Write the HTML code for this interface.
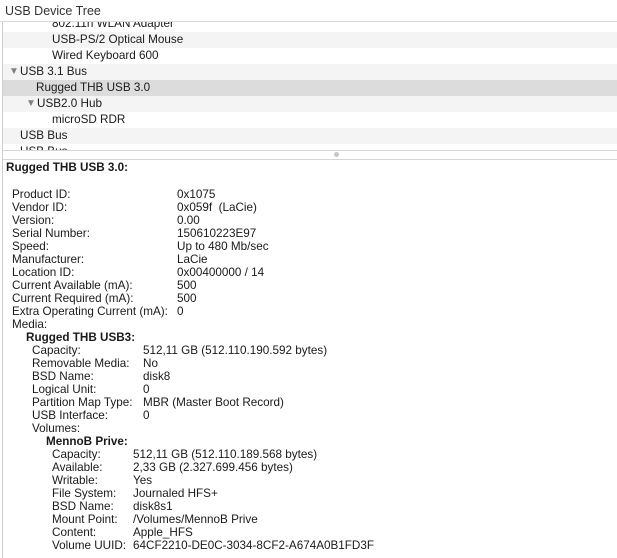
<!DOCTYPE html>
<html><head><style>
*{margin:0;padding:0}
body{width:617px;height:558px;background:#fff;font-family:"Liberation Sans",sans-serif;font-size:11.7px;color:#1a1a1a;position:relative;overflow:hidden}
.a{position:absolute;white-space:nowrap;line-height:13px}
.row{position:absolute;left:3px;width:614px;height:16px}
.g{background:#f4f4f4}
.t{position:absolute;white-space:nowrap;font-size:11.7px;line-height:16px;top:0}
.tri{font-size:10px;color:#808080}
</style></head><body>
<div style="position:absolute;left:0;top:0;width:617px;height:21px;background:#fff;border-bottom:1px solid #d8d8d8"></div>
<div class="a" style="left:5px;top:3px;font-size:12.5px;line-height:16px;color:#333">USB Device Tree</div>
<div style="position:absolute;left:2px;top:22px;width:1px;height:536px;background:#cfcfcf"></div>
<div class="row" style="top:16px;height:16px;clip-path:inset(6px 0 0 0)"><span class="t" style="left:49px">802.11n WLAN Adapter</span></div>
<div class="row g" style="top:32px"><span class="t" style="left:49px">USB-PS/2 Optical Mouse</span></div>
<div class="row" style="top:48px"><span class="t" style="left:49px">Wired Keyboard 600</span></div>
<div class="row g" style="top:64px"><span class="t tri" style="left:6px">▼</span><span class="t" style="left:17px">USB 3.1 Bus</span></div>
<div class="row" style="top:80px;background:#dcdcdc"><span class="t" style="left:33px">Rugged THB USB 3.0</span></div>
<div class="row g" style="top:96px"><span class="t tri" style="left:23px">▼</span><span class="t" style="left:34px">USB2.0 Hub</span></div>
<div class="row" style="top:112px"><span class="t" style="left:49px">microSD RDR</span></div>
<div class="row g" style="top:128px"><span class="t" style="left:17px">USB Bus</span></div>
<div class="row" style="top:144px;height:6px;overflow:hidden"><span class="t" style="left:17px">USB Bus</span></div>
<div style="position:absolute;left:3px;top:150px;width:614px;height:8px;background:#fff;border-top:1px solid #d6d6d6;border-bottom:1px solid #d6d6d6"></div>
<div style="position:absolute;left:334px;top:152px;width:5px;height:5px;border-radius:50%;background:#c8c8c8"></div>
<div class="a" style="left:6px;top:161px;font-weight:bold">Rugged THB USB 3.0:</div>
<div class="a" style="left:12px;top:188px">Product ID:<br>Vendor ID:<br>Version:<br>Serial Number:<br>Speed:<br>Manufacturer:<br>Location ID:<br>Current Available (mA):<br>Current Required (mA):<br>Extra Operating Current (mA):<br>Media:</div>
<div class="a" style="left:177px;top:188px">0x1075<br>0x059f&nbsp; (LaCie)<br>0.00<br>150610223E97<br>Up to 480 Mb/sec<br>LaCie<br>0x00400000 / 14<br>500<br>500<br>0</div>
<div class="a" style="left:26px;top:331px;font-weight:bold">Rugged THB USB3:</div>
<div class="a" style="left:32px;top:344px">Capacity:<br>Removable Media:<br>BSD Name:<br>Logical Unit:<br>Partition Map Type:<br>USB Interface:<br>Volumes:</div>
<div class="a" style="left:143px;top:344px">512,11 GB (512.110.190.592 bytes)<br>No<br>disk8<br>0<br>MBR (Master Boot Record)<br>0</div>
<div class="a" style="left:46px;top:435px;font-weight:bold">MennoB Prive:</div>
<div class="a" style="left:52px;top:448px">Capacity:<br>Available:<br>Writable:<br>File System:<br>BSD Name:<br>Mount Point:<br>Content:<br>Volume UUID:</div>
<div class="a" style="left:133px;top:448px">512,11 GB (512.110.189.568 bytes)<br>2,33 GB (2.327.699.456 bytes)<br>Yes<br>Journaled HFS+<br>disk8s1<br>/Volumes/MennoB Prive<br>Apple_HFS<br>64CF2210-DE0C-3034-8CF2-A674A0B1FD3F</div>
</body></html>
